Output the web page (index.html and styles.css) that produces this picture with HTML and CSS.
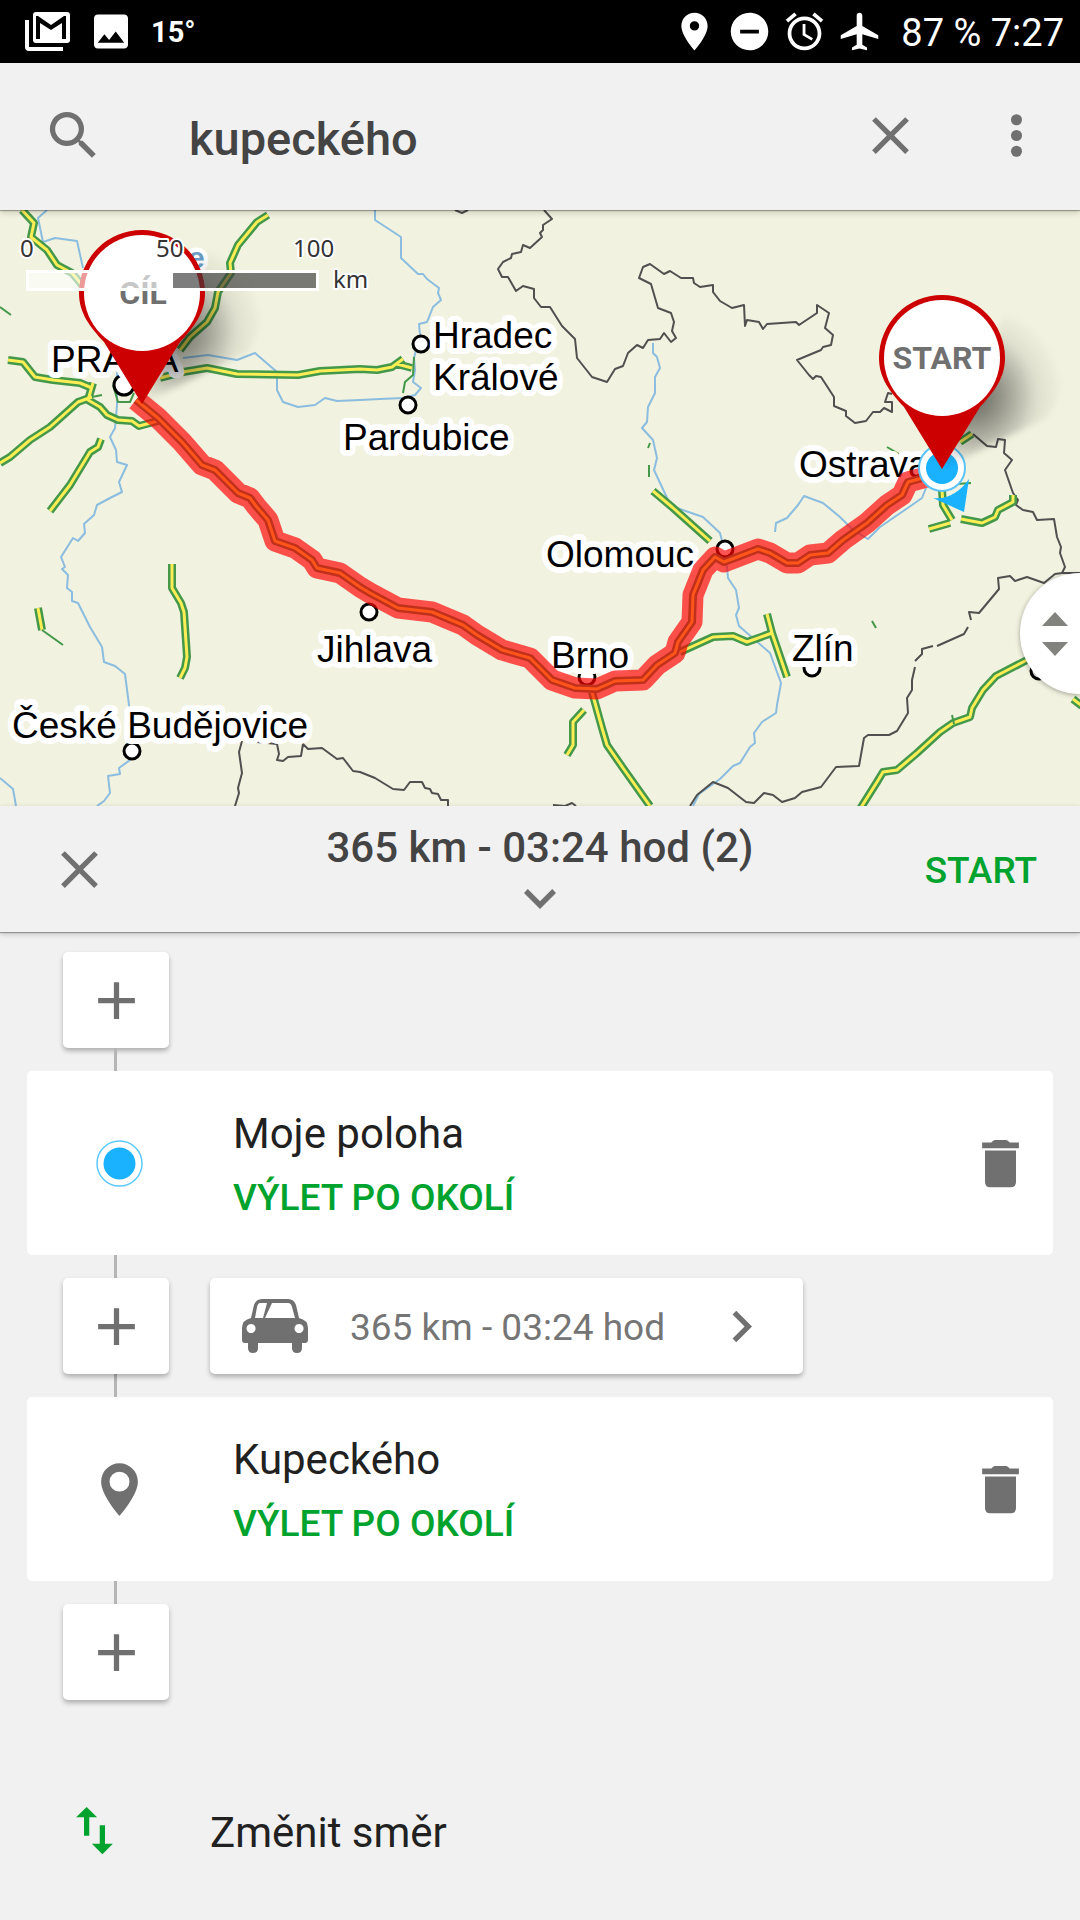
FILE: index.html
```html
<!DOCTYPE html>
<html lang="cs">

<head>
  <meta charset="UTF-8">
  <meta name="viewport" content="width=device-width, initial-scale=1.0">
  <title>Plánování trasy</title>
  <link rel="stylesheet" href="styles.css">
</head>

<body>
  <div class="status-bar">
    <svg class="status-mail" viewBox="0 0 45 39">
      <path d="M0 8h4v27h34v4H4q-4 0-4-4z" />
      <path fill-rule="evenodd" d="M11 0h31q3 0 3 3v25q0 3-3 3H11q-3 0-3-3V3q0-3 3-3zM11 4v23h4V11l11 7 11-7v16h4V4h-2L26 13 13 4z" />
    </svg>
    <svg class="status-image" viewBox="3 3 18 18">
      <path d="M21 19V5c0-1.100-.9-2-2-2H5c-1.100 0-2 .9-2 2v14c0 1.100.9 2 2 2h14c1.100 0 2-.9 2-2zM8.500 13.500l2.500 3.010L14.500 12l4.500 6H5z" />
    </svg>
    <span class="temperature">15°</span>
    <div class="status-right">
      <svg class="status-icon" viewBox="0 0 24 24"><path d="M12 2C8.130 2 5 5.130 5 9c0 5.250 7 13 7 13s7-7.750 7-13c0-3.870-3.130-7-7-7zm0 9.500a2.500 2.500 0 0 1 0-5 2.500 2.500 0 0 1 0 5z" /></svg>
      <svg class="status-icon" viewBox="0 0 24 24"><path d="M12 2C6.480 2 2 6.480 2 12s4.480 10 10 10 10-4.480 10-10S17.520 2 12 2zm5 11H7v-2h10v2z" /></svg>
      <svg class="status-icon" viewBox="0 0 24 24"><path d="M22 5.720l-4.600-3.860-1.290 1.530 4.600 3.860L22 5.720zM7.880 3.390L6.600 1.860 2 5.710l1.290 1.530 4.590-3.850zM12.500 8H11v6l4.750 2.850.75-1.230-4-2.370V8zM12 4c-4.970 0-9 4.030-9 9s4.020 9 9 9a9 9 0 0 0 0-18zm0 16c-3.870 0-7-3.130-7-7s3.130-7 7-7 7 3.130 7 7-3.130 7-7 7z" /></svg>
      <svg class="status-icon" viewBox="0 0 24 24"><path d="M22 16v-2l-8.500-5V3.500c0-.83-.67-1.500-1.500-1.500s-1.500.67-1.500 1.500V9L2 14v2l8.500-2.500V19L8 20.500V22l4-1 4 1v-1.500L13.500 19v-5.500L22 16z" /></svg>
      <span class="status-text">87 % 7:27</span>
    </div>
  </div>

  <header class="search-bar">
    <label for="search" aria-label="Hledat">
      <svg class="icon" viewBox="0 0 24 24"><path d="M15.500 14h-.79l-.28-.27A6.471 6.471 0 0 0 16 9.500 6.500 6.500 0 1 0 9.500 16c1.610 0 3.090-.59 4.230-1.570l.27.28v.79l5 4.990L20.490 19l-4.990-5zm-6 0C7.010 14 5 11.990 5 9.500S7.010 5 9.500 5 14 7.010 14 9.500 11.990 14 9.500 14z" /></svg>
    </label>
    <input type="text" id="search" name="search" value="kupeckého">
    <button class="icon-button" aria-label="Smazat">
      <svg class="icon" viewBox="0 0 24 24"><path d="M19 6.410L17.590 5 12 10.590 6.410 5 5 6.410 10.590 12 5 17.590 6.410 19 12 13.410 17.590 19 19 17.590 13.410 12z" /></svg>
    </button>
    <button class="icon-button" aria-label="Menu">
      <svg class="icon" viewBox="0 0 24 24"><circle cx="12" cy="6" r="2.100" /><circle cx="12" cy="12" r="2.100" /><circle cx="12" cy="18" r="2.100" /></svg>
    </button>
  </header>

  <main>
    <div class="map">
      <svg class="map-canvas" viewBox="0 210 1080 596">
        <defs>
          <radialGradient id="shade" gradientUnits="userSpaceOnUse" cx="30" cy="38" r="92">
            <stop offset="0" stop-color="#000" stop-opacity=".6" />
            <stop offset=".4" stop-color="#000" stop-opacity=".32" />
            <stop offset=".7" stop-color="#000" stop-opacity=".08" />
            <stop offset="1" stop-color="#000" stop-opacity="0" />
          </radialGradient>
          <filter id="soft" x="-30%" y="-30%" width="160%" height="160%"><feGaussianBlur stdDeviation="3" /></filter>
          <g id="pin">
            <path filter="url(#soft)" fill="url(#shade)" d="M0 111L104 60C140 10 120-50 70-60L30 30z" />
            <path fill="#c00" d="M0 111L-38 49C-52 34-63 20-63 0A63 63 0 0 1 63 0C63 20 52 34 38 49z" />
            <circle r="58" fill="#fff" />
          </g>
          <!-- motorways, drawn twice: green casing and yellow centre -->
          <g id="roads">
            <path d="M22 210L34 223 31 237 47 250 57 265 72 273 82 285" />
            <path d="M268 215L257 222 238 245 230 263 231 273 218 292 215 308 207 322 190 337 180 350" />
            <path d="M160 378L183 372 207 368 237 374 298 375 320 371 360 369 377 370 392 367 403 359M397 364L412 368" />
            <path d="M8 360L23 362 35 377 53 380 80 383 92 388" />
            <path d="M93 383L88 400 100 407 107 415 118 420 132 421 139 426 158 421" />
            <path d="M0 463L10 457 30 440 50 427 78 402 92 397" />
            <path d="M101 439L98 447 90 452 70 485 50 511" />
            <path d="M172 564L172 588 181 603 184 612 187 657 185 668 180 678" />
            <path d="M38 608L42 630" />
            <path d="M653 491L672 507 710 541" />
            <path d="M592 692L602 728 607 745 623 768 650 806" />
            <path d="M584 710L573 722 573 745 567 755" />
            <path d="M680 652L713 637 733 636 747 642 772 633M767 614L772 633 787 677" />
            <path d="M860 809L877 782 883 772 897 770 917 753 940 732 953 723 970 717 972 708 983 690 996 676 1025 661 1042 652" />
            <path d="M1073 699L1082 706" />
            <path d="M942 490L943 505 952 520M929 529L950 523" />
            <path d="M961 519L982 523 995 517 998 510 1013 502 1013 495" />
            <path d="M960 442L972 434" />
          </g>
          <path id="route" d="M136 400L158 418 182 442 202 465 215 470 238 493 250 498 256 506 268 520 275 541 295 548 312 560 317 568 340 573 360 587 370 593 398 608 432 612 463 625 477 635 502 650 530 658 552 680 575 688 597 689 615 681 643 680 657 665 675 653 678 642 692 622 693 595 703 570 715 557 724 562 758 549 770 553 787 563 798 563 810 555 828 553 843 540 867 523 887 505 902 495 908 482 930 476" />
        </defs>

        <rect y="210" width="1080" height="596" fill="#f1f2df" />

        <g class="river">
          <path d="M47 210L38 218 43 242 55 238 77 241 83 268" />
          <path d="M183 358L208 355 237 360 255 353 277 372 277 390 283 402 298 407 315 405 325 398 337 401 360 400 380 399 403 398 415 395 421 388 413 382 415 370 414 358 420 335 419 324 427 322 433 307 441 300 438 293 439 288 427 279 423 274 418 274 401 258 401 237 375 220 375 210" />
          <path d="M117 372L117 405 115 428 110 437 116 450 117 462 127 465 119 482 122 492 110 498 97 505 94 515 84 524 85 533 78 541 73 538 61 557 65 567 62 569 68 575 67 588 72 592 72 601 78 603 90 627 102 647 104 662 115 666 125 674 129 705 130 760 119 768 120 774 108 776 110 793 104 801 97 806" />
          <path d="M0 778L13 789 16 806" />
          <path d="M653 343L653 353 657 357 660 368 655 377 655 393 648 407 647 422 642 428 653 440 657 458 654 470 668 500 677 508 703 517 720 533 724 548 727 568 728 578 736 590 739 608 736 615 739 626 770 653 781 683 777 705 776 713 762 722 754 733 755 743 750 747 740 763 733 766 720 779 699 794 693 806" />
          <path d="M775 532L776 523 787 518 798 505 804 496 823 503 840 517 853 530 868 539 880 527 912 505 922 498 926 488" />
        </g>

        <g class="border">
          <path d="M455 210L462 213 468 210" />
          <path d="M544 210L552 219 543 225 543 230 540 233 542 237 530 248 523 245 521 252 512 254 511 258 503 262 498 269 502 277 508 277 516 291 523 286 534 289 534 298 541 307 550 307 562 326 575 339 577 358 592 377 607 382 615 369 623 366 628 353 637 345 643 348 648 340 660 339 664 333 671 342 676 338 672 331 674 322 671 313 658 308 651 284 639 278 643 267 650 264 664 274 670 271 681 278 693 278 694 283 700 287 713 285 713 292 720 301 732 308 744 305 745 326 747 320 759 322 763 329 767 324 796 322 799 325 817 313 817 305 829 313 825 328 833 335 831 345 823 347 821 350 797 360 809 375 813 379 816 376 821 377 834 397 834 406 846 411 846 416 855 423 866 421 873 412 880 412 884 408 892 412 892 402 885 402 888 393 892 394" />
          <path d="M973 434L987 446 996 447 998 439 1005 440 1004 453 1012 460 1005 470 1013 493 1018 500 1016 505 1023 510 1033 512 1037 520 1054 519 1057 537 1061 547 1060 553 1065 567 1062 573 1080 573M1062 573L1055 574 1044 583 1027 577 1015 581 1010 576 998 578 999 589 979 613 969 612 971 620M968 627L964 634 937 646M933 646L922 649 922 654 915 661M915 667L912 680 912 690 907 698 908 713 897 731 889 735 868 735 864 738 859 766 836 767 821 787 802 792 795 798 782 802 773 795 764 793 754 803 746 802 728 788 713 782 697 795 690 806" />
          <path d="M242 741L239 752 242 773 238 788 239 793 235 806" />
          <path d="M257 742L277 744 279 754 277 760 283 761 288 757 301 756 303 744 308 749 322 748 337 759 343 758 353 771 360 772 375 778 393 789 404 790 410 782 422 782 425 788 430 789 432 793 438 794 441 800 448 800 448 806" />
          <path d="M553 805L565 806 572 803 576 806" />
        </g>

        <use href="#roads" class="road-casing" />
        <use href="#roads" class="road-centre" />
        <g class="minor-road">
          <path d="M0 307L11 315M113 385L118 402 130 402 134 393M42 630L63 645M92 397L102 395" />
          <path d="M414 357L413 375 405 382 403 393M650 443L648 448M649 465L649 477" />
          <path d="M887 447L899 454M872 621L876 628M957 484L971 483M952 715L954 724" />
        </g>

        <g class="town">
          <circle cx="421" cy="344" r="8" />
          <circle cx="408" cy="405" r="8" />
          <circle cx="124" cy="385" r="10" />
          <circle cx="132" cy="751" r="8" />
          <circle cx="369" cy="612" r="8" />
          <circle cx="587" cy="677" r="8" />
          <circle cx="725" cy="549" r="8" />
          <circle cx="812" cy="668" r="8" />
          <circle cx="1039" cy="671" r="8" />
        </g>

        <g class="label">
          <text x="51" y="372">PRAHA</text>
          <text x="433" y="348">Hradec</text>
          <text x="433" y="390">Králové</text>
          <text x="343" y="450">Pardubice</text>
          <text x="799" y="477">Ostrava</text>
          <text x="546" y="567">Olomouc</text>
          <text x="551" y="668">Brno</text>
          <text x="792" y="661">Zlín</text>
          <text x="317" y="662">Jihlava</text>
          <text x="12" y="738">České Budějovice</text>
        </g>
        <text class="river-label" x="188" y="268">e</text>

        <use href="#route" class="route" />
        <use href="#route" class="route-casing" />
        <use href="#route" class="route-centre" />

        <path fill="#1ab2ff" d="M933 498C947 500 960 492 969 479L964 512z" />
        <circle cx="942" cy="468" r="23" fill="#fff" stroke="#5cc4f8" stroke-width="2" />
        <circle cx="942" cy="468" r="16" fill="#1ab2ff" />
        <use href="#pin" x="142" y="293" />
        <use href="#pin" x="942" y="358" />
        <text class="pin-label" x="143" y="304">CÍL</text>
        <text class="pin-label" x="942" y="369">START</text>

        <rect x="29" y="273" width="144" height="16" fill="#fff" fill-opacity=".6" />
        <rect x="173" y="273" width="143" height="16" fill="#393939" fill-opacity=".66" />
        <path fill="none" stroke="#fff" stroke-width="3" d="M173 271.500H27.500v18H173H317.500v-18z" />
        <g class="scale">
          <text x="20" y="257">0</text>
          <text x="156" y="257">50</text>
          <text x="293" y="257">100</text>
          <text x="333" y="288">km</text>
        </g>
      </svg>
      <button class="map-handle" aria-label="Změnit velikost mapy">
        <svg viewBox="0 0 26 44"><path d="M13 0L26 14H0zM0 30h26L13 44z" /></svg>
      </button>
    </div>

    <section class="summary">
      <button class="icon-button" aria-label="Zavřít">
        <svg class="icon" viewBox="0 0 24 24"><path d="M19 6.410L17.590 5 12 10.590 6.410 5 5 6.410 10.590 12 5 17.590 6.410 19 12 13.410 17.590 19 19 17.590 13.410 12z" /></svg>
      </button>
      <div class="summary-info">
        <h1>365 km - 03:24 hod (2)</h1>
        <svg class="summary-arrow" viewBox="6 8.590 12 7.410"><path d="M16.590 8.590L12 13.170 7.410 8.590 6 10l6 6 6-6z" /></svg>
      </div>
      <button class="start-button">START</button>
    </section>

    <section class="stops">
      <button class="box add-button" aria-label="Přidat bod">
        <svg class="icon" viewBox="0 0 24 24"><path d="M19 13h-6v6h-2v-6H5v-2h6V5h2v6h6z" /></svg>
      </button>
      <div class="connector"></div>

      <article class="stop">
        <svg class="icon" viewBox="0 0 63 63">
          <circle cx="31.500" cy="31.500" r="22.500" fill="#fff" stroke="#5cc9ff" stroke-width="1.500" />
          <circle cx="31.500" cy="31.500" r="16" fill="#1ab2ff" />
        </svg>
        <div class="stop-text">
          <h2>Moje poloha</h2>
          <a href="#">VÝLET PO OKOLÍ</a>
        </div>
        <button class="icon-button" aria-label="Odstranit">
          <svg class="icon" viewBox="0 0 24 24"><path d="M6.100 7h11.800v12q0 2-2 2H8.100q-2 0-2-2zM5 4h3.500q.7-1 1.300-1h4.400q.6 0 1.300 1H19v2.200H5z" /></svg>
        </button>
      </article>

      <div class="connector"></div>
      <div class="leg-row">
        <button class="box add-button" aria-label="Přidat bod">
          <svg class="icon" viewBox="0 0 24 24"><path d="M19 13h-6v6h-2v-6H5v-2h6V5h2v6h6z" /></svg>
        </button>
        <button class="box leg">
          <svg class="car" viewBox="0 0 66 54">
            <path fill-rule="evenodd" d="M20 0h26q6 0 8 6l3 13q9 2 9 10v12q0 3-3 3h-3v5q0 5-5 5t-5-5v-5H16v5q0 5-5 5t-5-5v-5H3q-3 0-3-3V29q0-8 9-10l3-13q2-6 8-6zM18 4q-2 0-3 4l-2 11h8l4-15zM30 4l-7 15h30L50 8q-1-4-4-4zM9 25a4.500 4.500 0 1 0 .1 0zM57 25a4.500 4.500 0 1 0 .1 0z" />
          </svg>
          <span>365 km - 03:24 hod</span>
          <svg class="icon" viewBox="0 0 24 24"><path d="M10 6L8.590 7.410 13.170 12l-4.580 4.590L10 18l6-6z" /></svg>
        </button>
      </div>
      <div class="connector"></div>

      <article class="stop">
        <svg class="icon" viewBox="0 0 24 24"><path d="M12 2C8.130 2 5 5.130 5 9c0 5.250 7 13 7 13s7-7.750 7-13c0-3.870-3.130-7-7-7zm0 10.800a3.800 3.800 0 0 1 0-7.600 3.800 3.800 0 0 1 0 7.600z" /></svg>
        <div class="stop-text">
          <h2>Kupeckého</h2>
          <a href="#">VÝLET PO OKOLÍ</a>
        </div>
        <button class="icon-button" aria-label="Odstranit">
          <svg class="icon" viewBox="0 0 24 24"><path d="M6.100 7h11.800v12q0 2-2 2H8.100q-2 0-2-2zM5 4h3.500q.7-1 1.300-1h4.400q.6 0 1.300 1H19v2.200H5z" /></svg>
        </button>
      </article>

      <div class="connector"></div>
      <button class="box add-button" aria-label="Přidat bod">
        <svg class="icon" viewBox="0 0 24 24"><path d="M19 13h-6v6h-2v-6H5v-2h6V5h2v6h6z" /></svg>
      </button>
    </section>

    <button class="reverse">
      <svg class="icon" viewBox="0 0 24 24"><path d="M16 17.010V10h-2v7.010h-3L15 21l4-3.990zM9 3L5 6.990h3V14h2V6.990h3z" /></svg>
      <span>Změnit směr</span>
    </button>
  </main>
</body>

</html>
```
FILE: styles.css
```css
* {
  box-sizing: border-box;
}

body {
  margin: 0;
  min-height: 100vh;
  background-color: #f1f1f1;
  color: #212121;
  font-family: Roboto, "Noto Sans", sans-serif;
}

button {
  padding: 0;
  border: none;
  background: none;
  color: inherit;
  font: inherit;
  cursor: pointer;
}

svg {
  display: block;
  flex-shrink: 0;
}

.icon {
  width: 63px;
  height: 63px;
  fill: #707070;
}

/* status bar */
.status-bar {
  display: flex;
  align-items: center;
  height: 63px;
  padding: 0 16px 0 25px;
  background-color: #000;
  color: #fff;
  fill: #fff;
}

.status-mail {
  width: 45px;
  height: 39px;
}

.status-image {
  width: 34px;
  height: 35px;
  margin-left: 24px;
}

.temperature {
  margin-left: 23px;
  font-size: 29px;
  font-weight: 700;
}

.status-right {
  display: flex;
  align-items: center;
  gap: 10px;
  margin-left: auto;
}

.status-icon {
  width: 45px;
  height: 45px;
}

.status-text {
  margin-left: 9px;
  padding-top: 3px;
  font-size: 38px;
}

/* search */
.search-bar {
  position: relative;
  z-index: 1;
  display: flex;
  align-items: center;
  gap: 63px;
  height: 147px;
  padding: 0 32px 2px 42px;
  background-color: #f1f1f1;
  box-shadow: 0 1px 1px rgba(0, 0, 0, 0.3), 0 3px 6px rgba(0, 0, 0, 0.15);
}

.search-bar input {
  flex: 1;
  min-width: 0;
  margin-left: 21px;
  padding: 6px 0 0;
  border: none;
  outline: none;
  background: none;
  color: #444;
  font: 500 47px Roboto, "Noto Sans", sans-serif;
}

/* map */
.map {
  position: relative;
  overflow: hidden;
}

.map-canvas {
  width: 100%;
  height: auto;
}

.river,
.border,
.minor-road,
.road-casing,
.road-centre,
.route,
.route-casing,
.route-centre {
  fill: none;
  stroke-linejoin: round;
}

.river {
  stroke: #8bbde0;
  stroke-width: 2px;
}

.border {
  stroke: #505050;
  stroke-width: 2px;
}

.minor-road {
  stroke: #439849;
  stroke-width: 2px;
}

.road-casing {
  stroke: #439849;
  stroke-width: 8px;
}

.road-centre {
  stroke: #fdee56;
  stroke-width: 3px;
}

.route {
  stroke: #f00;
  stroke-opacity: 0.67;
  stroke-width: 21px;
}

.route-casing {
  stroke: #c1301a;
  stroke-width: 8px;
}

.route-centre {
  stroke: #ff551a;
  stroke-width: 3px;
}

.town {
  fill: #fff;
  stroke: #000;
  stroke-width: 3px;
}

.label,
.river-label,
.scale {
  stroke: #fff;
  stroke-linejoin: round;
  paint-order: stroke;
}

.label {
  font-family: "Liberation Sans", Arial, sans-serif;
  font-size: 37px;
  stroke-width: 12px;
}

.river-label {
  fill: #6b9cc5;
  font: 700 30px "Liberation Sans", Arial, sans-serif;
  stroke-width: 9px;
}

.scale {
  fill: #333;
  font-family: "Noto Sans", sans-serif;
  font-size: 24px;
  stroke-width: 4px;
}

.pin-label {
  fill: #707070;
  font-size: 32px;
  font-weight: 700;
  text-anchor: middle;
}

.map-handle {
  position: absolute;
  top: 363px;
  right: 0;
  display: flex;
  align-items: center;
  width: 60px;
  height: 121px;
  padding-left: 22px;
  border-radius: 61px 0 0 61px;
  background-color: #fff;
  box-shadow: 0 1px 5px rgba(0, 0, 0, 0.35);
}

.map-handle svg {
  width: 26px;
  height: 44px;
  fill: #82827e;
}

/* route summary */
.summary {
  position: relative;
  display: grid;
  grid-template-columns: 1fr auto 1fr;
  align-items: center;
  height: 126px;
  padding: 0 43px;
  background-color: #f1f1f1;
  box-shadow: 0 1px 1px rgba(0, 0, 0, 0.3), 0 2px 6px rgba(0, 0, 0, 0.2);
}

.summary-info {
  display: flex;
  flex-direction: column;
  align-items: center;
  gap: 17px;
  padding-bottom: 6px;
}

.summary h1 {
  margin: 0;
  color: #444;
  font-size: 42px;
  font-weight: 500;
  line-height: 48px;
}

.summary-arrow {
  width: 32px;
  height: 20px;
  fill: #707070;
}

.summary .icon-button {
  justify-self: start;
  margin-left: 5px;
}

.start-button {
  justify-self: end;
  padding-top: 3px;
  color: #00a32e;
  font-size: 37px;
  font-weight: 500;
}

/* stops */
.stops {
  padding: 20px 27px 0;
}

.box {
  border-radius: 5px;
  background-color: #fff;
  box-shadow: 0 3px 5px rgba(0, 0, 0, 0.28);
}

.add-button {
  display: flex;
  align-items: center;
  justify-content: center;
  width: 106px;
  height: 96px;
  margin-left: 36px;
}

.connector {
  width: 3px;
  height: 23px;
  margin-left: 87px;
  background-color: #b5b5b5;
}

.stop {
  display: flex;
  align-items: center;
  min-height: 184px;
  padding: 0 21px 0 61px;
  border-radius: 5px;
  background-color: #fff;
}

.stop-text {
  flex: 1;
  margin-left: 82px;
  padding-top: 6px;
}

.stop h2 {
  margin: 0 0 14px;
  font-size: 42px;
  font-weight: 400;
  line-height: 50px;
}

.stop a {
  display: block;
  color: #00a32e;
  font-size: 37px;
  font-weight: 500;
  line-height: 50px;
  text-decoration: none;
}

.leg-row {
  display: flex;
  gap: 41px;
}

.leg {
  display: flex;
  align-items: center;
  height: 96px;
  padding: 0 30px 0 32px;
  color: #757575;
  font-size: 37px;
}

.leg span {
  margin: 0 45px 0 42px;
  padding-top: 2px;
}

.car {
  width: 66px;
  height: 54px;
  fill: #707070;
}

.reverse {
  display: flex;
  align-items: center;
  gap: 84px;
  width: 100%;
  margin-top: 83px;
  padding: 16px 63px;
  font-size: 42px;
}

.reverse span {
  padding-top: 4px;
}

.reverse .icon {
  fill: #00a32e;
}
```
